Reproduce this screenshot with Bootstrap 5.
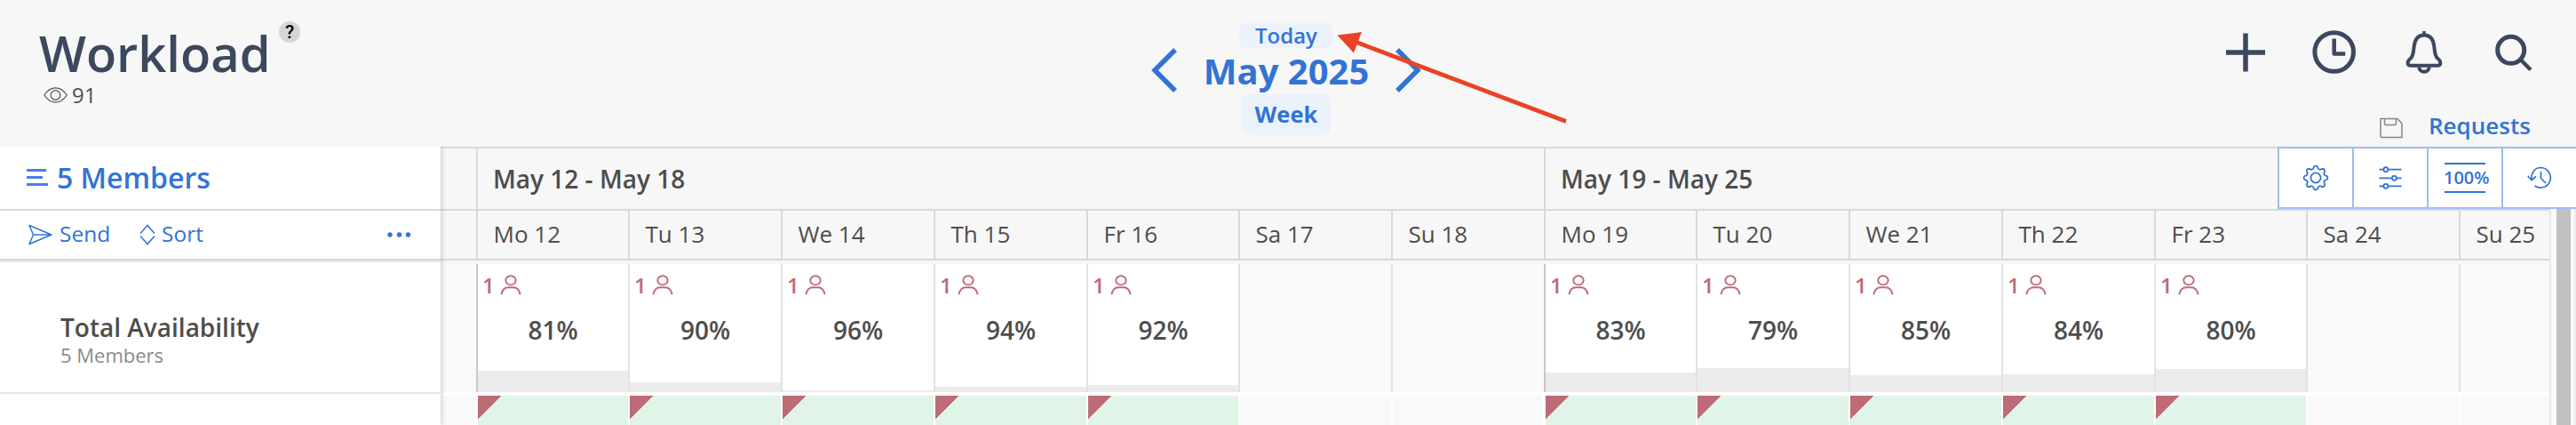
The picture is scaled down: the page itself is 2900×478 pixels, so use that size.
<!DOCTYPE html>
<html lang="en">
<head>
<meta charset="utf-8">
<title>Workload</title>
<link href="https://cdn.jsdelivr.net/npm/bootstrap@5.3.0/dist/css/bootstrap.min.css" rel="stylesheet">
<style>
  body { font-family: "Open Sans", "Noto Sans", sans-serif; background: #f7f7f7; color: #4d4d4d; width: 2900px; height: 478px; overflow: hidden; line-height: 1; }
  svg { display: block; flex: none; }
  .blue { color: #3273d4; }
  .navy { color: #3c485e; }
  .fw-s { font-weight: 600; }
  .topbar { height: 165px; }
  .brand { width: 1296px; padding: 26px 0 0 44px; }
  .brand h1 { width: 270px; font-size: 56px; font-weight: 600; line-height: 66px; margin: 0; }
  .help { width: 24px; height: 24px; background: #d6d6d6; color: #000; font: 500 21px/24px Roboto, sans-serif; margin-top: -2px; text-align: center; }
  .views { font-size: 24px; line-height: 30px; padding-left: 5px; gap: 5px; }
  .period { gap: 31px; padding-top: 26px; }
  .period > svg { margin-top: 28px; }
  .period-mid { width: 184px; }
  .pill { background: #ebf2fc; border-radius: 8px; }
  .pill-today { width: 106px; height: 28px; font-size: 24px; line-height: 28px; font-weight: 600; }
  .pill-week { width: 100px; height: 46px; font-size: 25.6px; line-height: 46px; font-weight: 700; }
  .month { font-size: 40px; line-height: 51px; height: 52px; font-weight: 700; white-space: nowrap; }
  .tools { width: 416px; padding-top: 32px; }
  .requests { font-size: 26px; line-height: 36px; margin-top: 37px; padding-left: 195px; gap: 28px; }
  .requests svg { margin-top: 6px; }
  .side { width: 496px; background: #fff; box-shadow: 1px 0 6px rgba(0,0,0,.2); clip-path: inset(0 -8px 0 0); z-index: 2; }
  .side-head { height: 72px; border-bottom: 2px solid #d9d9d9; padding: 0 0 1px 30px; font-size: 32px; gap: 9px; }
  .side-tools { height: 56px; border-bottom: 2px solid #d9d9d9; padding: 0 33px 1px 32px; font-size: 24.5px; }
  .side-tools .send { width: 98px; padding-left: 8px; }
  .side-tools .sort { padding-left: 7px; }
  .side-total { height: 150px; border-top: 2px solid #e5e5e5; border-bottom: 2px solid #e5e5e5; padding: 56px 0 0 68px; }
  .side-total b { font-size: 28px; font-weight: 600; line-height: 34px; }
  .side-total span { font-size: 22px; line-height: 28px; color: #8a8a8a; }
  .side-rest { height: 35px; }
  .sched { width: 2374px; }
  .lane { display: grid; grid-template-columns: 42px 171px 172px 172px 172px 171px 172px 172px 171px 172px 172px 172px 171px 172px 100px; }
  .weeks { display: grid; grid-template-columns: 42px 1202px 1130px; height: 72px; border-top: 2px solid #d9d9d9; border-bottom: 2px solid #d9d9d9; font-size: 28px; font-weight: 600; line-height: 68px; }
  .weeks div { border-right: 2px solid #d9d9d9; padding-left: 17px; }
  .weeks div:last-child { border: 0; }
  .days { height: 56px; border-bottom: 2px solid #d9d9d9; font-size: 26px; line-height: 52px; }
  .days div { border-right: 2px solid #d9d9d9; padding-left: 17.500px; white-space: nowrap; }
  .days div:last-child, .load > div:last-child, .slots div:last-child { border-right: 0; }
  .load { height: 144px; margin-top: 4px; }
  .load > div { border-right: 2px solid #e2e2e2; background: #f9f9f9; }
  .load > .wk { border-right-color: #c8c8c8; }
  .load > .on { background: #fff; display: flex; flex-direction: column; }
  .who { color: #be6b78; font-size: 24px; font-weight: 600; line-height: 24px; padding: 12px 0 0 5px; gap: 6px; }
  .pct { font-size: 28px; font-weight: 600; line-height: 36px; text-align: center; margin-top: 20px; }
  .fill { background: #ebebeb; margin-top: auto; }
  .slots { height: 37px; border-top: 4px solid #fff; }
  .slots div { background: #f9f9f9; border-right: 2px solid #fff; }
  .slots .wk { border-right-width: 4px; }
  .slots .ok { background: linear-gradient(135deg, #be6b78 18.4px, #e0f4e7 18.4px); }
  .rail { width: 30px; background: #f9f9f9; border-left: 2px solid #e8e8e8; border-right: 2px solid #ececec; padding-left: 6px; }
  .rail div { width: 16px; background: #c1c1c1; height: 100%; }
  .quick { position: absolute; right: 0; top: 165px; width: 336px; height: 70px; background: #fff; border: 2px solid #9dbdf2; border-right: 0; z-index: 3; }
  .quick > div { flex: none; width: 84px; border-right: 2px solid #9dbdf2; }
  .quick > div:last-child { border: 0; width: 82px; }
  .zoomed { width: 46px; height: 34px; border-top: 2px solid #3273d4; border-bottom: 2px solid #3273d4; font-size: 20px; line-height: 29px; font-weight: 600; white-space: nowrap; text-indent: -1px; }
  .pointer { position: absolute; left: 1500px; top: 30px; z-index: 4; }
</style>
</head>
<body>
<svg width="0" height="0" class="position-absolute">
  <symbol id="person" viewBox="0 0 24 24"><g fill="none" stroke="currentColor" stroke-width="1.9"><ellipse cx="12" cy="6.300" rx="5.700" ry="5.100"/><path d="M1.300 22.200C2.500 17 5.500 14.300 9 14.300h6c3.500 0 6.500 2.700 7.700 7.900"/></g></symbol>
</svg>

<header class="topbar d-flex">
  <div class="brand">
    <div class="d-flex align-items-start">
      <h1 class="navy">Workload</h1>
      <div class="help rounded-circle">?</div>
    </div>
    <div class="views d-flex align-items-center">
      <svg width="27" height="18" viewBox="0 0 27 18" fill="none" stroke="#555" stroke-width="1.200"><path d="M.8 9C8-1.800 19-1.800 26.200 9 19 19.800 8 19.800 .8 9z"/><circle cx="13.500" cy="9" r="5.300"/></svg>
      <span>91</span>
    </div>
  </div>
  <nav class="period d-flex align-items-start blue">
    <svg width="29" height="50" viewBox="0 0 29 50" fill="none" stroke="currentColor" stroke-width="5.500"><path d="M27 2 4 25l23 23"/></svg>
    <div class="period-mid d-flex flex-column align-items-center">
      <div class="pill pill-today text-center">Today</div>
      <div class="month">May 2025</div>
      <div class="pill pill-week text-center">Week</div>
    </div>
    <svg width="29" height="50" viewBox="0 0 29 50" fill="none" stroke="currentColor" stroke-width="5.500"><path d="M2 2l23 23L2 48"/></svg>
  </nav>
  <div class="tools ms-auto">
    <div class="navy d-flex">
      <svg width="416" height="54" viewBox="0 0 416 54" fill="none" stroke="currentColor" stroke-width="5">
        <path d="M22 27h44M44 5.500v43" stroke-width="5.500"/>
        <circle cx="143.700" cy="26.500" r="21.800"/><path d="M143.700 11.500v17h12.500" stroke-width="4.500" stroke-linejoin="round"/>
        <g stroke-width="4" stroke-linejoin="round"><path d="M245 7.500c7 0 10.300 5 11.200 12 1 8.500 1.300 11.500 4.300 14.500 4 3 3.500 7.700 0 7.700h-31c-3.500 0-4-4.700 0-7.700 3-3 3.300-6 4.300-14.500.9-7 4.200-12 11.200-12z"/><path d="M239.200 43.500c1 7 10.600 7 11.600 0"/><path d="M245 3v4" stroke-width="3.500"/></g>
        <circle cx="342.700" cy="24.300" r="15"/><path d="M353.500 35 365 46.500" stroke-width="4.500"/>
      </svg>
    </div>
    <div class="requests blue fw-s d-flex align-items-center">
      <svg width="27" height="24" viewBox="0 0 27 24" fill="none" stroke="#858585" stroke-width="1.500"><path d="M1 1.500h19l5 5.500v15.500H2L1 21.500zM5.500 1.500v6l1 1h11l1-1v-6"/></svg>
      <span>Requests</span>
    </div>
  </div>
</header>

<main class="d-flex">
  <aside class="side">
    <div class="side-head d-flex align-items-center blue fw-s">
      <svg width="25" height="19" viewBox="0 0 25 19" fill="#4680ea"><path d="M0 0h22v3H0zM0 8h18v3H0zM0 16h24v3H0z"/></svg>
      <span>5 Members</span>
    </div>
    <div class="side-tools d-flex align-items-center blue">
      <svg width="27" height="24" viewBox="0 0 27 24" fill="none" stroke="currentColor" stroke-width="1.500" stroke-linejoin="round"><path d="M1 1.500 26 12 1 22.500 5.500 12zM5.500 12H26"/></svg>
      <span class="send">Send</span>
      <svg width="18" height="24" viewBox="0 0 18 24" fill="none" stroke="currentColor" stroke-width="1.500"><path d="M1 10.500 9 1.500l8 9M1 13.500l8 9 8-9"/></svg>
      <span class="sort">Sort</span>
      <svg class="ms-auto" width="27" height="6" fill="currentColor"><circle cx="3" cy="3" r="2.700"/><circle cx="13.500" cy="3" r="2.700"/><circle cx="23.500" cy="3" r="2.700"/></svg>
    </div>
    <div class="side-total d-flex flex-column">
      <b>Total Availability</b>
      <span>5 Members</span>
    </div>
    <div class="side-rest"></div>
  </aside>

  <section class="sched">
    <div class="weeks"><div></div><div>May 12 - May 18</div><div>May 19 - May 25</div></div>
    <div class="lane days">
      <div></div><div>Mo 12</div><div>Tu 13</div><div>We 14</div><div>Th 15</div><div>Fr 16</div><div>Sa 17</div><div>Su 18</div>
      <div>Mo 19</div><div>Tu 20</div><div>We 21</div><div>Th 22</div><div>Fr 23</div><div>Sa 24</div><div>Su 25</div>
    </div>
    <div class="lane load">
      <div class="wk"></div>
      <div class="on"><div class="who d-flex">1<svg width="24" height="24"><use href="#person"/></svg></div><div class="pct">81%</div><div class="fill" style="height:24px"></div></div>
      <div class="on"><div class="who d-flex">1<svg width="24" height="24"><use href="#person"/></svg></div><div class="pct">90%</div><div class="fill" style="height:11px"></div></div>
      <div class="on"><div class="who d-flex">1<svg width="24" height="24"><use href="#person"/></svg></div><div class="pct">96%</div><div class="fill" style="height:2px"></div></div>
      <div class="on"><div class="who d-flex">1<svg width="24" height="24"><use href="#person"/></svg></div><div class="pct">94%</div><div class="fill" style="height:6px"></div></div>
      <div class="on"><div class="who d-flex">1<svg width="24" height="24"><use href="#person"/></svg></div><div class="pct">92%</div><div class="fill" style="height:8px"></div></div>
      <div></div>
      <div class="wk"></div>
      <div class="on"><div class="who d-flex">1<svg width="24" height="24"><use href="#person"/></svg></div><div class="pct">83%</div><div class="fill" style="height:22px"></div></div>
      <div class="on"><div class="who d-flex">1<svg width="24" height="24"><use href="#person"/></svg></div><div class="pct">79%</div><div class="fill" style="height:27px"></div></div>
      <div class="on"><div class="who d-flex">1<svg width="24" height="24"><use href="#person"/></svg></div><div class="pct">85%</div><div class="fill" style="height:19px"></div></div>
      <div class="on"><div class="who d-flex">1<svg width="24" height="24"><use href="#person"/></svg></div><div class="pct">84%</div><div class="fill" style="height:20px"></div></div>
      <div class="on"><div class="who d-flex">1<svg width="24" height="24"><use href="#person"/></svg></div><div class="pct">80%</div><div class="fill" style="height:26px"></div></div>
      <div></div>
      <div></div>
    </div>
    <div class="lane slots">
      <div class="wk"></div><div class="ok"></div><div class="ok"></div><div class="ok"></div><div class="ok"></div><div class="ok"></div><div></div><div class="wk"></div>
      <div class="ok"></div><div class="ok"></div><div class="ok"></div><div class="ok"></div><div class="ok"></div><div></div><div></div>
    </div>
  </section>
  <div class="rail"><div></div></div>
</main>

<div class="quick d-flex blue">
  <div class="d-flex align-items-center justify-content-center">
    <svg width="30" height="30" viewBox="-15 -15 30 30" fill="none" stroke="currentColor" stroke-width="1.800" stroke-linejoin="round"><circle r="5.600"/><path d="M11.670-2.320A2.400 2.400 0 0 1 11.670 2.320A2.600 2.600 0 0 0 9.890 6.610A2.400 2.400 0 0 1 6.610 9.890A2.600 2.600 0 0 0 2.320 11.670A2.400 2.400 0 0 1-2.320 11.670A2.600 2.600 0 0 0-6.610 9.890A2.400 2.400 0 0 1-9.890 6.610A2.600 2.600 0 0 0-11.670 2.320A2.400 2.400 0 0 1-11.670-2.320A2.600 2.600 0 0 0-9.890-6.610A2.400 2.400 0 0 1-6.610-9.890A2.600 2.600 0 0 0-2.320-11.670A2.400 2.400 0 0 1 2.320-11.670A2.600 2.600 0 0 0 6.610-9.890A2.400 2.400 0 0 1 9.890-6.610A2.600 2.600 0 0 0 11.670-2.320z"/></svg>
  </div>
  <div class="d-flex align-items-center justify-content-center">
    <svg width="26" height="26" viewBox="0 0 26 26" fill="none" stroke="currentColor" stroke-width="1.800"><path d="M.5 3.700h5M10.500 3.700h15M.5 13.300h14M20 13.300h5.500M.5 22.300h5M10.500 22.300h15"/><circle cx="7.900" cy="3.700" r="2.500"/><circle cx="17.400" cy="13.300" r="2.500"/><circle cx="7.900" cy="22.300" r="2.500"/></svg>
  </div>
  <div class="d-flex align-items-center justify-content-center"><div class="zoomed">100%</div></div>
  <div class="d-flex align-items-center justify-content-center">
    <svg width="28" height="26" viewBox="0 0 28 26" fill="none" stroke="currentColor" stroke-width="1.700"><path d="M5 15C4 7 9 1.500 15.500 1.500A11.300 11.300 0 1 1 8.500 22M.8 11l4.200 4.500L10 11.500M15.500 6v7.500l5.500 5.500"/></svg>
  </div>
</div>

<svg class="pointer" width="270" height="115" viewBox="0 0 270 115"><path d="M27 17.500 263 106.500" stroke="#eb4226" stroke-width="4.800"/><path d="M5.500 9.500 33 6 24 29.500z" fill="#eb4226"/></svg>
<script src="https://cdn.jsdelivr.net/npm/bootstrap@5.3.0/dist/js/bootstrap.bundle.min.js"></script>
</body>
</html>
